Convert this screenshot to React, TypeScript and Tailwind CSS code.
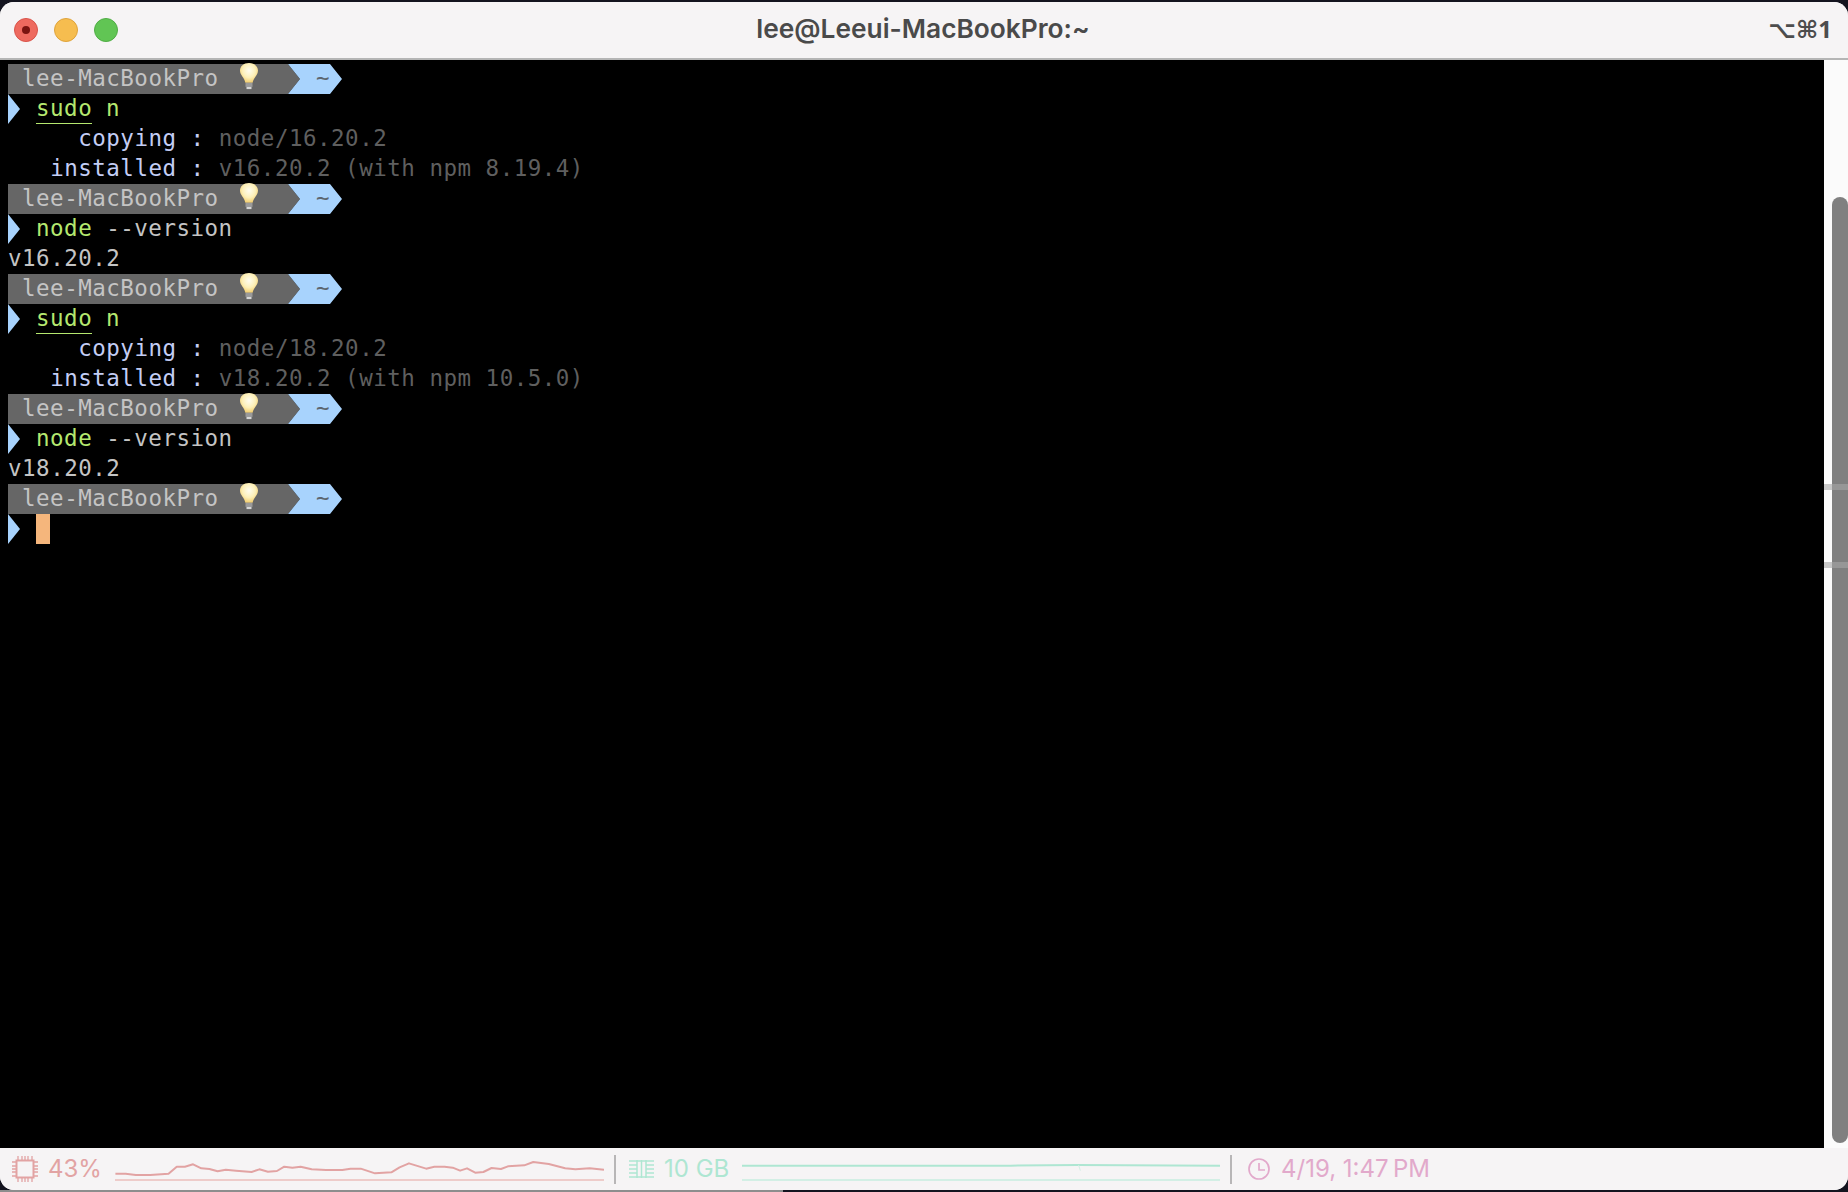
const mono = "font-['DejaVu_Sans_Mono',monospace] text-[22.5px] tracking-[0.5px] leading-[28px] whitespace-pre";

const Bulb = () => (
  <svg width="18" height="27" viewBox="1 0 18 30" preserveAspectRatio="none" className="shrink-0 block">
    <defs>
      <radialGradient id="glass" cx="50%" cy="38%" r="60%">
        <stop offset="0%" stopColor="#fffdf0" />
        <stop offset="60%" stopColor="#fdf0b8" />
        <stop offset="100%" stopColor="#f3cf72" />
      </radialGradient>
    </defs>
    <path d="M10 0C4.500 0 1 3.800 1 8.500c0 5 4.400 7.400 5.400 13.500h7.200C14.600 15.900 19 13.500 19 8.500 19 3.800 15.500 0 10 0z" fill="url(#glass)" />
    <rect x="6.500" y="22" width="7" height="4.500" fill="#9a9a9a" />
    <rect x="7.500" y="26.500" width="5" height="2.500" fill="#d8d8d8" />
  </svg>
);

const Prompt = () => (
  <div className="h-[30px] flex pl-2">
    <div className="h-[30px] w-[280px] bg-[#666666] shrink-0 flex pl-[14px]">
      <span className={`${mono} text-[#c4c4c4]`}>lee-MacBookPro</span>
      <span className="ml-[21px] -mt-px"><Bulb /></span>
    </div>
    <div className="relative h-[30px] w-[54px] shrink-0">
      <svg width="54" height="30" viewBox="0 0 54 30" className="block">
        <path d="M0 0L12 15L0 30Z" fill="#666666" />
        <path d="M0 0H42L54 15L42 30H0L12 15Z" fill="#a8d3fd" />
      </svg>
      <span className={`${mono} absolute left-[28px] top-0 text-[#5c6670]`}>~</span>
    </div>
  </div>
);

const Caret = () => (
  <svg width="12" height="30" viewBox="0 0 12 30" className="shrink-0">
    <path d="M0 0L12 15L0 30Z" fill="#a8d3fd" />
  </svg>
);

const Command = ({ name, args, under }: { name: string; args: string; under?: boolean }) => (
  <div className="h-[30px] flex pl-2">
    <Caret />
    <span className={`${mono} ml-4 h-[30px] text-[#b5e86f] ${under ? "border-b border-[#b5e86f] w-[56px]" : ""}`}>{name}</span>
    <span className={`${mono} text-[#b5e86f]`}> </span>
    <span className={`${mono} ${args === "n" ? "text-[#b5e86f]" : "text-[#c4c4c4]"}`}>{args}</span>
  </div>
);

const Info = ({ label, value }: { label: string; value: string }) => (
  <div className={`${mono} h-[30px] pl-2`}>
    <span className="text-[#c3cdf5]">{label}</span>
    <span className="text-[#c3cdf5]"> : </span>
    <span className="text-[#5f5f5f]">{value}</span>
  </div>
);

const Output = ({ text }: { text: string }) => <div className={`${mono} h-[30px] pl-2 text-[#c4c4c4]`}>{text}</div>;

const cpuPoints =
  "1,131 26,131 51,135 86,135 131,131 151,110 171,110 191,103 211,115 231,117 251,124 271,119 296,122 334,126 353,118 374,125 396,123 414,110 434,113 454,110 481,118 516,120 556,120 576,116 601,116 636,130 676,127 696,112 719,100 761,116 781,110 806,110 826,113 844,122 861,115 881,128 901,126 921,114 944,117 961,109 1001,106 1023,96 1061,102 1101,115 1126,118 1161,115 1196,119";

const CpuIcon = () => (
  <svg width="26" height="26" viewBox="0 0 26 26" fill="none" stroke="#e2a3a3" className="shrink-0">
    <rect x="4.500" y="4.500" width="17" height="17" strokeWidth="2" />
    <path d="M6 0v4M10 0v4M13 0v4M16 0v4M20 0v4M6 22v4M10 22v4M13 22v4M16 22v4M20 22v4M0 6h4M0 10h4M0 13h4M0 16h4M0 20h4M22 6h4M22 10h4M22 13h4M22 16h4M22 20h4" strokeWidth="1.300" />
  </svg>
);

const MemIcon = () => (
  <svg width="25" height="18" viewBox="0 0 25 18" fill="none" stroke="#aee6d2" className="shrink-0">
    <path d="M8 0v18M12.500 0v18M17 0v18" strokeWidth="1.500" />
    <path d="M0 1h25M0 5h8M0 9h8M0 13h8M0 17h25M17 5h8M17 9h8M17 13h8" strokeWidth="1.700" />
  </svg>
);

const ClockIcon = () => (
  <svg width="22" height="22" viewBox="0 0 22 22" fill="none" stroke="#e2a9cb" strokeWidth="1.700" className="shrink-0">
    <circle cx="11" cy="11" r="10" />
    <path d="M11 5v7h6" />
  </svg>
);

const Separator = () => <div className="w-[2px] h-[29px] bg-[#b8b6b7] shrink-0" />;

export default function App() {
  return (
    <div className="w-[1848px] h-[1192px] bg-[#14141f] overflow-hidden relative">
      <div className="absolute left-0 bottom-0 w-[783px] h-[2px] bg-[#8d8d8d]" />
      <div className="h-[1188px] mt-[2px] rounded-t-[14px] rounded-b-[14px] overflow-hidden flex flex-col bg-[#f6f4f5] relative">
        {/* Title bar */}
        <div className="h-[58px] shrink-0 bg-[#f6f4f5] border-b-2 border-[#b5b5b5] flex items-center font-['Inter',sans-serif]">
          <div className="flex-1 flex gap-4 pl-[14px]">
            <div className="w-6 h-6 rounded-full bg-[#ee6a5f] border border-[#d9534a] flex items-center justify-center">
              <div className="w-2 h-2 rounded-full bg-[#7a1410]" />
            </div>
            <div className="w-6 h-6 rounded-full bg-[#f6bd4f] border border-[#dfa33b]" />
            <div className="w-6 h-6 rounded-full bg-[#61c554] border border-[#50ad45]" />
          </div>
          <div className="text-[26.3px] font-semibold text-[#4a4a4a] -mt-0.5">lee@Leeui-MacBookPro:~</div>
          <div className="flex-1 pr-4 text-right text-[24px] font-bold text-[#4d4d4d] font-['Noto_Sans','DejaVu_Sans',sans-serif] -mt-0.5">⌥⌘1</div>
        </div>

        {/* Terminal + scrollbar */}
        <div className="flex-1 flex min-h-0">
          <div className="w-[1824px] bg-black pt-1">
            <Prompt />
            <Command name="sudo" args="n" under />
            <Info label="     copying" value="node/16.20.2" />
            <Info label="   installed" value="v16.20.2 (with npm 8.19.4)" />
            <Prompt />
            <Command name="node" args="--version" />
            <Output text="v16.20.2" />
            <Prompt />
            <Command name="sudo" args="n" under />
            <Info label="     copying" value="node/18.20.2" />
            <Info label="   installed" value="v18.20.2 (with npm 10.5.0)" />
            <Prompt />
            <Command name="node" args="--version" />
            <Output text="v18.20.2" />
            <Prompt />
            <div className="h-[30px] flex pl-2">
              <Caret />
              <div className="ml-4 w-[14px] h-[30px] bg-[#f5b67c]" />
            </div>
          </div>
          <div className="flex-1 bg-[#fbfbfb] pl-2 pt-[137px] pb-[5px] relative">
            <div className="h-full bg-[#808080] rounded-t-lg rounded-b-lg" />
            <div className="absolute left-0 right-0 top-[424px] h-[6px] bg-[#a6a6a6]/60" />
            <div className="absolute left-0 right-0 top-[502px] h-[6px] bg-[#a6a6a6]/60" />
          </div>
        </div>

        {/* Status bar */}
        <div className="h-[42px] shrink-0 bg-[#f6f4f5] flex items-center font-['Inter',sans-serif] text-[24px] whitespace-nowrap">
          <div className="pl-3 flex items-center">
            <CpuIcon />
            <span className="ml-[10px] w-[67px] text-[#e2a3a3]">43%</span>
          </div>
          <svg width="489" height="30" viewBox="0 72 1196 90" preserveAspectRatio="none" fill="none" className="shrink-0">
            <polyline points={cpuPoints} stroke="#e2a3a3" strokeWidth="2" strokeLinejoin="round" vectorEffect="non-scaling-stroke" />
            <path d="M0 150H1196" stroke="#eeccca" strokeWidth="2" vectorEffect="non-scaling-stroke" />
          </svg>
          <div className="ml-[10px]"><Separator /></div>
          <div className="ml-[13px] flex items-center">
            <MemIcon />
            <span className="ml-[10px] w-[78px] text-[#aee6d2]">10 GB</span>
          </div>
          <svg width="478" height="30" viewBox="0 72 1068 90" preserveAspectRatio="none" fill="none" className="shrink-0">
            <path d="M0 107H600L750 105L1068 107" stroke="#aee6d2" strokeWidth="2" vectorEffect="non-scaling-stroke" />
            <path d="M752 105L756 122" stroke="#d3efe5" strokeWidth="1" vectorEffect="non-scaling-stroke" />
            <path d="M0 150H1068" stroke="#d3efe5" strokeWidth="2" vectorEffect="non-scaling-stroke" />
          </svg>
          <div className="ml-[10px]"><Separator /></div>
          <div className="ml-4 flex items-center">
            <ClockIcon />
            <span className="ml-[11px] text-[#e2a9cb]">{"4/19, 1:47\u202FPM"}</span>
          </div>
        </div>
      </div>
    </div>
  );
}
